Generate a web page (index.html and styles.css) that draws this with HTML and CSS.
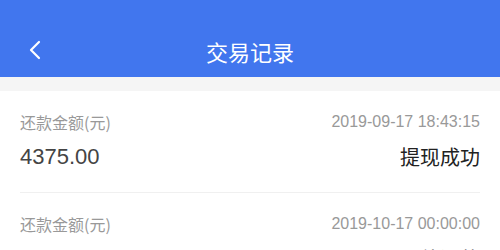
FILE: index.html
```html
<!DOCTYPE html>
<html lang="zh-CN">
<head>
<meta charset="utf-8">
<title>交易记录</title>
<link rel="stylesheet" href="styles.css">
</head>
<body>
<header class="topbar">
  <span class="back">
    <svg width="14" height="20" viewBox="0 0 14 20"><polyline points="11,2 3,10 11,18" fill="none" stroke="#fff" stroke-width="2.2" stroke-linecap="round" stroke-linejoin="round"/></svg>
  </span>
  <h1 class="title">交易记录</h1>
</header>
<div class="gap"></div>
<ul class="list">
  <li class="item">
    <div class="row">
      <span class="label">还款金额(元)</span>
      <span class="date">2019-09-17 18:43:15</span>
    </div>
    <div class="row row-main">
      <span class="amount">4375.00</span>
      <span class="status">提现成功</span>
    </div>
  </li>
  <li class="item">
    <div class="row">
      <span class="label">还款金额(元)</span>
      <span class="date">2019-10-17 00:00:00</span>
    </div>
    <div class="row row-main">
      <span class="amount">4375.00</span>
      <span class="status">待还款</span>
    </div>
  </li>
</ul>
</body>
</html>
```

FILE: styles.css
```css
* { box-sizing: border-box; }
html, body { margin: 0; padding: 0; }
body {
  width: 500px;
  height: 250px;
  overflow: hidden;
  background: #fff;
  font-family: "Liberation Sans", "Noto Sans CJK SC", sans-serif;
}
.topbar {
  position: relative;
  height: 77px;
  background: #4176ee;
  display: flex;
  align-items: center;
  justify-content: center;
  padding-top: 24px;
}
.back {
  position: absolute;
  left: 28px;
  top: 40px;
  display: flex;
}
.title {
  margin: 0;
  font-size: 22px;
  font-weight: normal;
  color: #fff;
  line-height: 30px;
  font-family: "Noto Sans CJK SC", sans-serif;
}
.gap {
  height: 14px;
  background: #f5f5f5;
}
.list {
  list-style: none;
  margin: 0;
  padding: 0 20px;
}
.item {
  padding: 20px 0 20px;
  border-bottom: 1px solid #f0f0f0;
}
.row {
  display: flex;
  justify-content: space-between;
  align-items: center;
  line-height: 22px;
}
.row-main {
  margin-top: 9px;
  line-height: 30px;
}
.label {
  font-size: 16px;
  color: #999;
  font-family: "Noto Sans CJK SC", sans-serif;
}
.date {
  font-size: 16px;
  color: #999;
}
.amount {
  font-size: 22px;
  color: #444;
}
.status {
  font-size: 20px;
  color: #222;
  font-family: "Noto Sans CJK SC", sans-serif;
}
```
